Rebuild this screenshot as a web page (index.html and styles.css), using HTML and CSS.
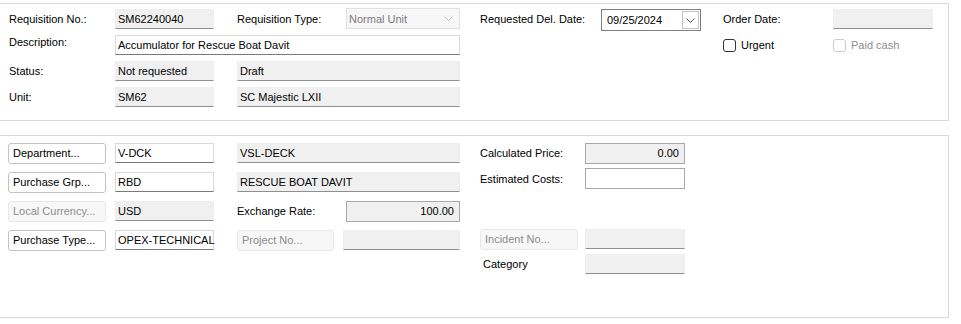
FILE: index.html
```html
<!DOCTYPE html>
<html lang="en">

<head>
    <meta charset="utf-8">
    <meta name="viewport" content="width=device-width, initial-scale=1.0">
    <title>Requisition</title>
    <link rel="stylesheet" href="styles.css">
</head>

<body>
    <!-- header panel -->
    <section class="panel head">
        <label class="lbl c1">Requisition No.:</label>
        <div class="fld ro w99">SM62240040</div>
        <label class="lbl">Requisition Type:</label>
        <div class="combo">
            <span>Normal Unit</span>
            <svg class="chev" width="9" height="5" viewBox="0 0 9 5"><path d="M0.5 0.5 L4.5 4.5 L8.5 0.5" fill="none" stroke="#c4c4c4" stroke-width="1"/></svg>
        </div>
        <label class="lbl">Requested Del. Date:</label>
        <div class="date">
            <span>09/25/2024</span>
            <span class="drop">
                <svg width="9" height="5" viewBox="0 0 9 5"><path d="M0.5 0.5 L4.5 4.5 L8.5 0.5" fill="none" stroke="#555" stroke-width="1"/></svg>
            </span>
        </div>
        <label class="lbl">Order Date:</label>
        <div class="fld ro w100"></div>

        <label class="lbl c1 top">Description:</label>
        <div class="fld desc">Accumulator for Rescue Boat Davit</div>
        <label class="chk c7"><span class="box"></span>Urgent</label>
        <label class="chk off"><span class="box"></span>Paid cash</label>

        <label class="lbl c1">Status:</label>
        <div class="fld ro w99">Not requested</div>
        <div class="fld ro wide">Draft</div>

        <label class="lbl c1">Unit:</label>
        <div class="fld ro w99">SM62</div>
        <div class="fld ro wide">SC Majestic LXII</div>
    </section>

    <!-- details panel -->
    <section class="panel body">
        <div class="left">
            <button class="btn c1">Department...</button>
            <div class="fld w99">V-DCK</div>
            <div class="fld ro wide">VSL-DECK</div>

            <button class="btn c1">Purchase Grp...</button>
            <div class="fld w99">RBD</div>
            <div class="fld ro wide">RESCUE BOAT DAVIT</div>

            <button class="btn c1" disabled>Local Currency...</button>
            <div class="fld ro w99">USD</div>
            <label class="lbl">Exchange Rate:</label>
            <div class="fld num ro boxed w114">100.00</div>

            <button class="btn c1">Purchase Type...</button>
            <div class="fld w99">OPEX-TECHNICAL</div>
            <div class="pair">
                <button class="btn short" disabled>Project No...</button>
                <div class="fld ro grow"></div>
            </div>
        </div>

        <div class="right">
            <label class="lbl">Calculated Price:</label>
            <div class="fld num ro boxed w100">0.00</div>
            <label class="lbl">Estimated Costs:</label>
            <div class="fld boxed w100"></div>

            <div class="spacer"></div>

            <button class="btn" disabled>Incident No...</button>
            <div class="fld ro w100"></div>
            <label class="lbl cat">Category</label>
            <div class="fld ro w100"></div>
        </div>
    </section>
</body>

</html>
```

FILE: styles.css
```css
body {
    margin: 0;
    font-family: "Liberation Sans", Arial, sans-serif;
    font-size: 11px;
    color: #000;
    background: #fff;
}

.panel {
    box-sizing: border-box;
    width: 949px;
    border: 1px solid #dadada;
    border-left: none;
}

.head {
    margin-top: 3px;
    height: 118px;
    padding: 5px 0 0 9px;
    display: grid;
    grid-template-columns: 106px 122px 109px 134px 121px 122px 110px 100px;
    grid-template-rows: repeat(4, 20px);
    row-gap: 6px;
    align-items: center;
}

.body {
    margin-top: 14px;
    height: 183px;
    padding: 7px 0 0 8px;
    display: flex;
    gap: 20px;
    align-items: flex-start;
}

.left {
    display: grid;
    grid-template-columns: 107px 122px 109px 114px;
    grid-template-rows: 20px 20px 20px 20px;
    row-gap: 9px;
    align-items: center;
}

.right {
    display: grid;
    grid-template-columns: 105px 100px;
    grid-template-rows: 20px 21px 30px 20px 20px;
    row-gap: 5px;
    align-items: center;
}

.spacer {
    grid-column: span 2;
}

.c1 {
    grid-column: 1;
}

.c7 {
    grid-column: 7;
}

.lbl {
    white-space: nowrap;
}

.top {
    align-self: start;
    padding-top: 1px;
}

.cat {
    padding-left: 3px;
}

/* text fields */
.fld {
    box-sizing: border-box;
    height: 20px;
    line-height: 18px;
    padding: 0 0 0 2px;
    background: #fff;
    border: 1px solid #d9d9d9;
    border-bottom-color: #7a7a7a;
    white-space: nowrap;
}

.ro {
    background: #f0f0f0;
    border-color: #eeeeee;
    border-bottom-color: #8f8f8f;
}

.boxed {
    border-color: #a8a8a8;
    height: 21px;
}

.num {
    text-align: right;
    padding-right: 5px;
}

.w99 {
    width: 99px;
}

.w100 {
    width: 100px;
}

.w114 {
    width: 114px;
}

.wide {
    grid-column: span 2;
    width: 223px;
}

.desc {
    grid-column: span 3;
    width: 345px;
}

.grow {
    flex: 1;
}

/* combo and date */
.combo {
    box-sizing: border-box;
    width: 114px;
    height: 21px;
    align-self: start;
    margin-top: -1px;
    display: flex;
    align-items: center;
    justify-content: space-between;
    padding: 0 6px 0 2px;
    background: #f7f7f7;
    border: 1px solid #e1e1e1;
    color: #7c7c7c;
}

.date {
    box-sizing: border-box;
    width: 100px;
    height: 22px;
    align-self: start;
    display: flex;
    align-items: center;
    justify-content: space-between;
    padding: 0 1px 0 5px;
    border: 1px solid #7f7f7f;
}

.drop {
    box-sizing: border-box;
    width: 17px;
    height: 18px;
    display: flex;
    align-items: center;
    justify-content: center;
    border: 1px solid #c4c4c4;
}

/* buttons */
.btn {
    box-sizing: border-box;
    width: 98px;
    height: 21px;
    padding: 0 0 0 4px;
    text-align: left;
    font: inherit;
    color: #000;
    background: #fff;
    border: 1px solid #c3c3c3;
    border-radius: 3px;
    white-space: nowrap;
}

.btn:disabled {
    color: #8d8d8d;
    background: #f7f7f7;
    border-color: #e8e8e8;
}

.short {
    width: 97px;
}

.pair {
    grid-column: span 2;
    width: 223px;
    display: flex;
    gap: 9px;
}

/* checkboxes */
.chk {
    display: flex;
    align-items: center;
    gap: 5px;
}

.box {
    box-sizing: border-box;
    width: 13px;
    height: 13px;
    border: 1px solid #333;
    border-radius: 3px;
    background: #fff;
}

.off {
    color: #8d8d8d;
}

.off .box {
    border-color: #cccccc;
}
```
